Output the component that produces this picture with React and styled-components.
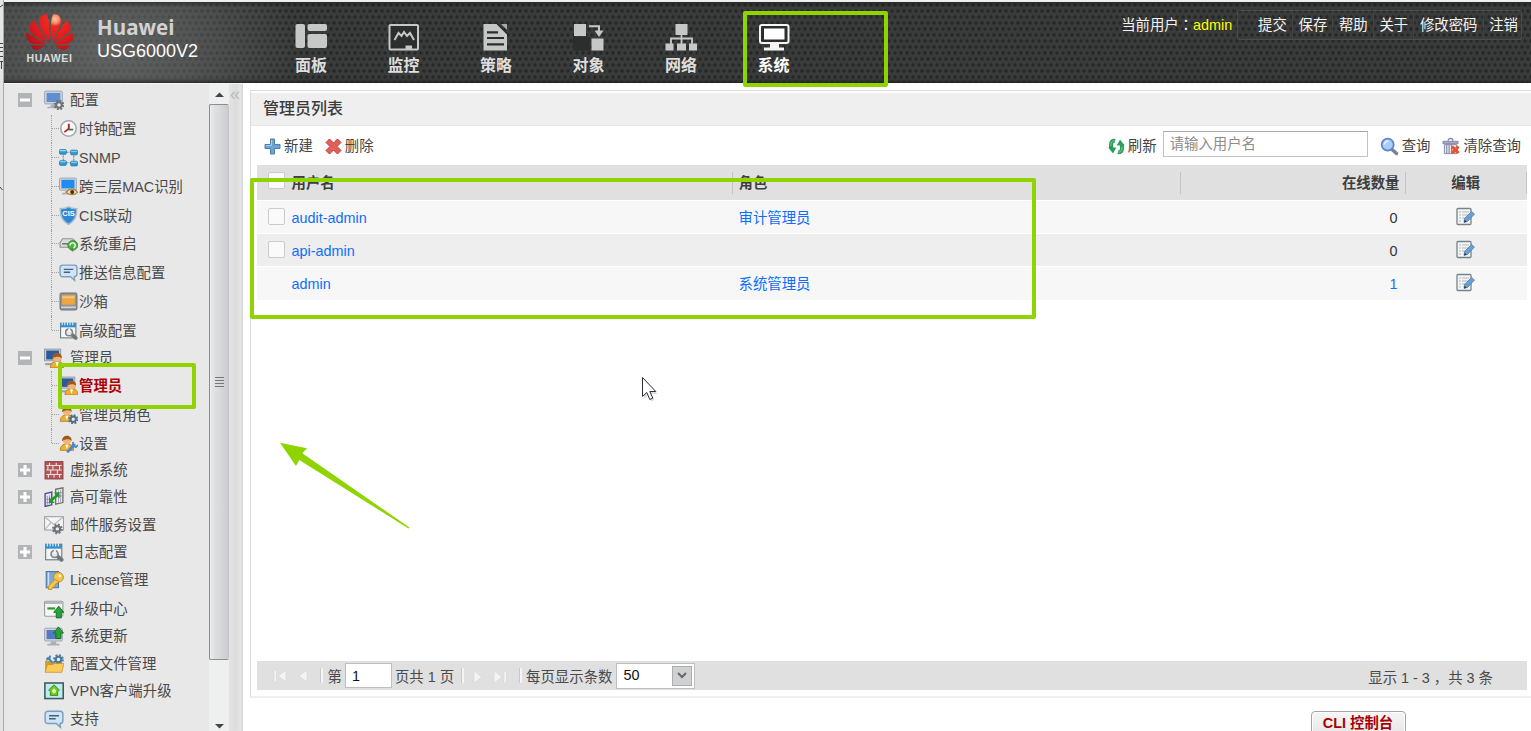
import React from 'react';
import { SiHuawei } from 'react-icons/si';
import styled, { createGlobalStyle } from 'styled-components';

const GlobalStyle = createGlobalStyle`
  * {
    box-sizing: border-box;
  }
  body {
    margin: 0;
    background: #fff;
    font-family: "Liberation Sans", "Noto Sans CJK SC", sans-serif;
    font-size: 14.4px;
    color: #444;
    overflow: hidden;
  }
`;

const Page = styled.div`
  position: relative;
  display: flex;
  width: 1531px;
  height: 731px;
  overflow: hidden;
`;

const EdgeStrip = styled.div`
  width: 4px;
  flex: none;
  background: #e4e4e4;
  border-right: 1px solid #a9a9a9;
  svg {
    display: block;
  }
`;

const Frame = styled.div`
  flex: 1;
  min-width: 0;
  display: flex;
  flex-direction: column;
  border-top: 2px solid #eef0f0;
`;

// colon sits in the middle of its cell
const Colon = styled.span`
  font-family: "Noto Sans CJK TC", sans-serif;
  line-height: 1;
`;

/* ---------- header ---------- */

const Header = styled.header`
  height: 81px;
  flex: none;
  display: flex;
  background-color: #3a3b3b;
  background-image: linear-gradient(180deg, rgba(30, 30, 30, 0.6), transparent 5px, transparent 76px, rgba(30, 30, 30, 0.7)),
    radial-gradient(ellipse 190px 140px at 105px 48px, rgba(122, 125, 125, 0.62) 0%, rgba(112, 115, 115, 0.46) 45%, rgba(100, 100, 100, 0) 100%),
    radial-gradient(circle at 3px 3px, #262727 1.2px, transparent 2.2px),
    radial-gradient(circle at 3px 3px, #262727 1.2px, transparent 2.2px);
  background-size: auto, auto, 6px 12px, 6px 12px;
  background-position: 0 0, 0 0, 0 0, 3px 6px;
  background-repeat: no-repeat, no-repeat, repeat, repeat;
`;

const Brand = styled.div`
  width: 291px;
  display: flex;
  padding: 6px 0 0 21px;
`;

const Logo = styled.div`
  width: 49px;
  height: 60px;
  overflow: hidden;
  display: flex;
  flex-direction: column;
  align-items: center;
  svg {
    flex: none;
    fill: url(#petal);
  }
  span {
    margin-top: -4px;
    font: bold 10.5px/12px "Liberation Sans", sans-serif;
    color: #dcdcdc;
    letter-spacing: 0.7px;
  }
`;

const Product = styled.div`
  padding: 6px 0 0 23px;
  h1 {
    margin: 0;
    font: 700 20.5px/26px "Open Sans", sans-serif;
    color: #d2d2d2;
  }
  p {
    margin: 0;
    font-size: 18px;
    line-height: 22px;
    color: #fff;
  }
`;

const Nav = styled.nav`
  display: flex;
  padding-top: 22px;
`;

const NavItem = styled.a`
  width: 92.5px;
  color: ${(p) => (p.$active ? '#fff' : '#dedede')};
  font: bold 16px/26px "Noto Sans CJK SC", sans-serif;
  svg {
    display: block;
    height: 28px;
    margin-bottom: -1px;
    color: ${(p) => (p.$active ? '#f4f4f4' : '#c6c7c7')};
  }
`;

const UserBar = styled.div`
  margin-left: auto;
  padding: 8px 9px 0 0;
  display: flex;
  height: 38px;
  color: #f2f2f2;
  line-height: 30px;
  b {
    font-weight: normal;
    color: #ff0;
  }
`;

const UserLinks = styled.div`
  display: flex;
  margin-left: 5px;
  padding-left: 14px;
  border: 1px solid #4b4c4c;
  border-radius: 2px;
  line-height: 28px;
  a {
    padding: 0 5px 0 5.7px;
  }
  a + a {
    border-left: 1px solid #414242;
  }
  a:last-child {
    padding-right: 3px;
  }
`;

/* ---------- sidebar ---------- */

const Body = styled.div`
  flex: 1;
  display: flex;
  min-height: 0;
`;

const Sidebar = styled.aside`
  width: 239px;
  flex: none;
  display: flex;
  background: #e8e8e8;
  border-top: 1px solid #f5f5f5;
`;

const Tree = styled.div`
  width: 205px;
  padding-top: 2px;
  overflow: hidden;
`;

const TreeRow = styled.div`
  display: flex;
  align-items: center;
  height: ${(p) => p.$h}px;
  padding-left: ${(p) => (p.$child ? 47 : 14)}px;
  white-space: nowrap;
  color: ${(p) => (p.$selected ? '#b00000' : '#4a4a4a')};
  font-weight: ${(p) => (p.$selected ? 'bold' : 'normal')};
  svg {
    flex: none;
  }
`;

const Expander = styled.span`
  width: 14px;
  height: 14px;
  margin-right: 12px;
  flex: none;
  display: flex;
  align-items: center;
  justify-content: center;
  background: ${(p) => (p.$none ? 'transparent' : '#b2b5b5')};
`;

const Branch = styled.span`
  align-self: flex-start;
  height: ${(p) => (p.$last ? '50%' : '100%')};
  border-left: 1px dotted #a0a0a0;
`;

const Elbow = styled.span`
  width: 7px;
  border-top: 1px dotted #a0a0a0;
`;

const TreeLabel = styled.span`
  margin-left: ${(p) => (p.$child ? 1 : 6)}px;
  padding-top: ${(p) => (p.$child ? 1 : 0)}px;
  line-height: 20px;
`;

const Scrollbar = styled.div`
  width: 20px;
  display: flex;
  flex-direction: column;
  background: #eeefef;
`;

const ScrollArrow = styled.div`
  height: 20px;
  display: flex;
  align-items: center;
  justify-content: center;
  margin-top: ${(p) => (p.$down ? 'auto' : 0)};
  padding-top: ${(p) => (p.$down ? 10 : 0)}px;
`;

const Thumb = styled.div`
  height: 556px;
  border: 1px solid #8e8e8e;
  border-right-color: #c4c4c8;
  border-radius: 2px;
  background: linear-gradient(90deg, #ecedee, #dfe0e2 25%, #d6d8da 60%, #cbccd0);
  display: flex;
  align-items: center;
  justify-content: center;
`;

const Splitter = styled.div`
  width: 14px;
  padding: 2px 0 0 1px;
  background: linear-gradient(90deg, #e3e3e3, #dcdcdc 50%, #e6e6e6 85%, #cfcfcf);
  color: #bcbcbc;
  font-size: 18px;
  line-height: 16px;
`;

/* ---------- main panel ---------- */

const Main = styled.main`
  flex: 1;
  min-width: 0;
  padding: 7px 0 0 7px;
  display: flex;
  flex-direction: column;
`;

const Panel = styled.section`
  height: 608px;
  flex: none;
  display: flex;
  flex-direction: column;
  border: 1px solid #dcdcdc;
  border-right: 0;
  border-bottom: 2px solid #efefef;
`;

const PanelTitle = styled.h2`
  margin: 2px 0 0;
  height: 33px;
  padding-left: 12px;
  background: #efefef;
  border-bottom: 1px solid #e4e4e4;
  font: 500 16px/28px "Noto Sans CJK SC", sans-serif;
  color: #3c3c3c;
`;

const Toolbar = styled.div`
  height: 39px;
  display: flex;
  align-items: center;
  padding: 1px 10px 0 13px;
`;

const ToolButton = styled.span`
  display: flex;
  align-items: center;
  gap: 3px;
  margin-right: 12px;
  line-height: 20px;
  &:last-child {
    margin-right: 0;
  }
`;

const Search = styled.input`
  width: 205px;
  height: 26px;
  margin: -4px 12px 0 -6px;
  padding: 0 0 1px 6px;
  border: 1px solid #c3c3c3;
  border-top-color: #a8a8a8;
  font: 14.4px "Liberation Sans", "Noto Sans CJK SC", sans-serif;
  outline: 0;
  &::placeholder {
    color: #8c8c8c;
    opacity: 1;
  }
`;

const Spacer = styled.span`
  flex: 1;
`;

const columns = `
  display: grid;
  grid-template-columns: 476px 448px 225px 1fr;
  align-items: center;
`;

const Table = styled.div`
  margin: 0 4px 0 5.5px;
  flex: 1;
`;

const HeadRow = styled.div`
  ${columns}
  height: 36px;
  background: #e0e0e0;
  border-bottom: 1px solid #fff;
  font-weight: bold;
  color: #3e3e3e;
`;

const DataRow = styled.div`
  ${columns}
  height: 33.2px;
  background: ${(p) => (p.$odd ? '#eeeeee' : '#f7f7f7')};
  border-bottom: 1px solid #fff;
  color: #0d6efd;
`;

const Cell = styled.div`
  display: flex;
  align-items: center;
  height: 22px;
  line-height: 20px;
  justify-content: ${(p) => p.$align || 'flex-start'};
  padding: ${(p) => p.$pad || '0'};
  color: ${(p) => p.$color || 'inherit'};
  border-right: 1px solid ${(p) => (p.$rule ? '#c4c4c4' : 'transparent')};
  svg {
    margin-top: -2px;
  }
`;

const Checkbox = styled.span`
  width: 17px;
  height: 17px;
  flex: none;
  margin: ${(p) => (p.$hidden ? 0 : '-4px')} 7px 0 0;
  border: 1px solid #c9cccc;
  border-radius: 2px;
  background: #fafafa;
  visibility: ${(p) => (p.$hidden ? 'hidden' : 'visible')};
`;

const Pager = styled.div`
  height: 29px;
  margin: 0 4px 6px 5.5px;
  display: flex;
  align-items: center;
  background: #e0e0e0;
  color: #4a4a4a;
  white-space: nowrap;
  svg {
    flex: none;
  }
`;

const Divider = styled.span`
  width: 3px;
  height: 15px;
  border-left: 1px solid #c9c9c9;
  border-right: 2px solid #f4f4f4;
  margin: ${(p) => p.$margin};
`;

const PageInput = styled.span`
  width: 47px;
  height: 25px;
  margin: 0 3px 0 3px;
  padding-left: 6px;
  border: 1px solid #bcbec0;
  background: #fff;
  color: #111;
  line-height: 24px;
`;

const PageSize = styled.span`
  display: flex;
  align-items: center;
  justify-content: space-between;
  width: 79px;
  height: 26px;
  margin-left: 4px;
  padding: 0 2px 1px 6px;
  border: 1px solid #bcbec0;
  background: #fff;
  color: #111;
  i {
    display: flex;
    align-items: center;
    justify-content: center;
    width: 20px;
    height: 20px;
    margin-top: 1px;
    border: 1px solid #adadb0;
    background: #d0d1d3;
  }
`;

const Summary = styled.span`
  margin-left: auto;
  padding: 2px 34px 0 0;
`;

const Footer = styled.footer`
  display: flex;
  justify-content: flex-end;
  padding: 13px 125px 0 0;
`;

const CliButton = styled.button`
  width: 95px;
  height: 26px;
  flex: none;
  padding: 0 1px 2px 0;
  border: 1px solid #a4a4a4;
  border-radius: 4px;
  background: linear-gradient(#f6f6f6, #e6e6e6);
  box-shadow: inset 0 0 0 1px #fff;
  color: #a80000;
  font: bold 14.4px/22px "Liberation Sans", "Noto Sans CJK SC", sans-serif;
  white-space: nowrap;
`;

/* ---------- marks over the page ---------- */

const Highlight = styled.div`
  position: absolute;
  left: ${(p) => p.$x}px;
  top: ${(p) => p.$y}px;
  width: ${(p) => p.$w}px;
  height: ${(p) => p.$h}px;
  border: 4px solid #8fd400;
  border-radius: 2px;
`;

const Pointer = styled.svg`
  position: absolute;
  left: ${(p) => p.$x}px;
  top: ${(p) => p.$y}px;
`;

/* ---------- icons ---------- */

const NavSvg = ({ children }) => (
  <svg width="32" height="28" viewBox="0 0 32 28" fill="currentColor">
    {children}
  </svg>
);

const navItems = [
  {
    label: '面板',
    icon: (
      <>
        <rect x="0.5" y="0" width="9.5" height="24" rx="2" />
        <rect x="12.5" y="0" width="19.5" height="7" rx="2" />
        <rect x="12.5" y="10" width="19.5" height="14" rx="2" />
      </>
    ),
  },
  {
    label: '监控',
    icon: (
      <>
        <rect x="1.5" y="1" width="28.5" height="24.5" rx="1" fill="#2c2d2d" stroke="currentColor" strokeWidth="2" />
        <path d="M6.500 16l4-7 3 3L16 8l3 4 3-3 4 7" fill="none" stroke="currentColor" strokeWidth="2" />
        <path d="M17.500 26v-4.500h6.500V26z" />
      </>
    ),
  },
  {
    label: '策略',
    icon: (
      <>
        <path d="M3.500 0h13.500l10 10v16.500H3.500z" />
        <path d="M21 0h6v6z" opacity=".8" />
        <path d="M16.500 -1l11 11" stroke="#2c2d2d" strokeWidth="1.500" />
        <path d="M7 8.300h11M7 14h17M7 20.300h17" stroke="#2c2d2d" strokeWidth="2.200" />
      </>
    ),
  },
  {
    label: '对象',
    icon: (
      <>
        <path d="M0 13h17v13.500H0z" fill="#2c2d2d" />
        <rect x="1" y="0" width="12" height="12" />
        <rect x="18.500" y="14.500" width="12" height="12" />
        <path d="M16 2.300h10V7" fill="none" stroke="currentColor" strokeWidth="2" />
        <path d="M21.500 6.500h9L26 13z" />
      </>
    ),
  },
  {
    label: '网络',
    icon: (
      <>
        <rect x="10.500" y="0" width="12" height="11" />
        <path d="M16.500 11v9M6 20v-5.500h21V20" fill="none" stroke="currentColor" strokeWidth="1.800" />
        <rect x="0.500" y="19.500" width="8" height="7" />
        <rect x="12" y="19.500" width="9" height="7" />
        <rect x="24" y="19.500" width="8" height="7" />
      </>
    ),
  },
  {
    label: '系统',
    active: true,
    icon: (
      <>
        <rect x="2" y="1" width="28.500" height="18" rx="2" fill="#2c2d2d" stroke="currentColor" strokeWidth="2" />
        <rect x="6" y="4.500" width="20.500" height="11" fill="#fff" />
        <path d="M12 20h9v3.500h5v3H6v-3h6z" />
      </>
    ),
  },
];

const Screen = ({ fill = '#4f7fc8' }) => (
  <>
    <rect x="0.5" y="1" width="16" height="11.500" rx="1" fill="#d2d6dc" stroke="#98a0a8" strokeWidth=".8" />
    <rect x="2.300" y="2.600" width="12.400" height="8.200" fill={fill} />
    <path d="M6 13h5v2h3v1.500H3V15h3z" fill="#a9aeb4" />
  </>
);

const Gear = ({ x = 13.5, y = 13.5, fill = '#6f7276' }) => (
  <g>
    <circle cx={x} cy={y} r="3.900" fill="none" stroke={fill} strokeWidth="1.800" strokeDasharray="1.700 1.360" />
    <circle cx={x} cy={y} r="2.500" fill="#e8ecef" stroke={fill} strokeWidth="1.900" />
  </g>
);

const Person = () => (
  <>
    <path d="M3.200 17.500c0-4 2-6 6.300-6s6.300 2 6.300 6z" fill="#efb02e" stroke="#a8701a" strokeWidth=".7" />
    <path d="M8 12l1.500 4.500L11 12z" fill="#fff" />
    <circle cx="9.500" cy="8" r="4" fill="#eeb478" />
    <path d="M5 8.800C4.300 1.800 14.700 1.800 14 8.800c-1-2.300-6-2.500-9 0z" fill="#9a5a1c" />
  </>
);

const Note = () => (
  <>
    <rect x="1.500" y="2" width="14.500" height="14" fill="#f3f5f6" stroke="#6d7a82" strokeWidth="1" />
    <path d="M1.500 2h14.500v4H1.500z" fill="#2f8fd0" />
    <path d="M3 1v3M5.500 1v3M8 1v3M10.500 1v3M13 1v3" stroke="#e8eef2" strokeWidth="1" />
    <path d="M15.800 16l-3.500-3" stroke="#70777c" strokeWidth="3.600" strokeLinecap="round" />
    <circle cx="9.500" cy="10.800" r="3.200" fill="#e4e7e9" stroke="#7b8287" strokeWidth="1.400" />
    <path d="M9.800 10.800V7" stroke="#f3f5f6" strokeWidth="1.800" />
  </>
);

const Chat = () => (
  <>
    <path d="M3.500 2h11c1.500 0 2.500 1 2.500 2.500v6c0 1.500-1 2.500-2.500 2.500l.3 3.500L11 13H3.500C2 13 1 12 1 10.500v-6C1 3 2 2 3.500 2z" fill="#cfe4f7" stroke="#7d9dbd" strokeWidth="1.300" />
    <path d="M4.500 6h9M4.500 8.800h6" stroke="#44617f" strokeWidth="1.300" />
  </>
);

const UpArrow = ({ x = 9, y = 5 }) => (
  <path d={`M${x} ${y + 5.5}l4.500-5.500 4.500 5.500h-2.200v5h-4.600v-5z`} fill="#27a33a" stroke="#0e6a20" strokeWidth=".8" />
);

const icons = {
  config: (
    <>
      <Screen fill="#5f8fd0" />
      <Gear />
    </>
  ),
  clock: (
    <>
      <circle cx="9" cy="9" r="7.300" fill="#fbfbfb" stroke="#a3a8b0" strokeWidth="1.500" />
      <path d="M9.300 4.500V10" stroke="#c21f1f" strokeWidth="1.800" />
      <path d="M5 12.500l4-3" stroke="#c21f1f" strokeWidth="1.600" />
      <path d="M9 10h4.500" stroke="#2f7a3c" strokeWidth="1.600" />
    </>
  ),
  snmp: (
    <>
      <path d="M4 4h10M4 14h10M4 4v10M14 4v10" stroke="#7a8288" strokeWidth="1" strokeDasharray="2 1" />
      <g fill="#2f9ad0" stroke="#1b6f9e" strokeWidth=".6">
        <rect x="0.500" y="1.500" width="6.500" height="4.500" rx="1" />
        <rect x="11" y="2" width="6.500" height="4.500" rx="1" />
        <rect x="0.500" y="12" width="6.500" height="4.500" rx="1" />
        <rect x="11" y="12.500" width="6.500" height="4.500" rx="1" />
      </g>
      <path d="M1 2.500h5.500M11.500 3H17M1 13h5.500M11.500 13.500H17" stroke="#9bdcf5" strokeWidth="1" />
    </>
  ),
  mac: (
    <>
      <Screen fill="#1e8cf0" />
      <path d="M7 14.500c2.500-4 8-4 10.500 0-2.500 3-8 3-10.500 0z" fill="#f8e6c0" stroke="#b8862c" strokeWidth="1.200" />
      <circle cx="12.500" cy="14.300" r="2" fill="#40382c" />
    </>
  ),
  cis: (
    <>
      <path d="M9 .8c2.500 1.500 5 1.800 7.800 1.700.3 7-2 12-7.800 15C3.200 14.500.9 9.500 1.200 2.500 4 2.600 6.500 2.300 9 .8z" fill="#2f86d6" stroke="#a9bccb" strokeWidth="1.400" />
      <text x="9" y="9.800" textAnchor="middle" fontSize="7" fontWeight="bold" fontFamily="Liberation Sans" fill="#fff">CIS</text>
    </>
  ),
  restart: (
    <>
      <path d="M3.500 4.500h9.500l4 4v4H1V8z" fill="#d9dcdc" stroke="#8b9090" strokeWidth="1" />
      <path d="M3 9.300h6" stroke="#777" strokeWidth="1.500" />
      <circle cx="13" cy="10.800" r="4.600" fill="#52b04a" stroke="#358030" strokeWidth=".8" />
      <path d="M10.500 10.800a2.400 2.400 0 1 1 2.500 2.400" fill="none" stroke="#e8ffe0" strokeWidth="1.300" />
      <path d="M13.500 12v5l-3-2.500z" fill="#3c9436" />
    </>
  ),
  push: <Chat />,
  sandbox: (
    <>
      <rect x="1" y="1" width="16" height="16" rx="1.500" fill="#8f959b" stroke="#6d7379" strokeWidth="1" />
      <rect x="3" y="3" width="12" height="9" fill="#f0a640" />
      <path d="M3 5h12" stroke="#f7c67c" strokeWidth="2" />
      <path d="M2 14.500h14" stroke="#d0d4d8" strokeWidth="1.500" />
    </>
  ),
  advanced: <Note />,
  admin: (
    <>
      <rect x="0.500" y="1" width="14.500" height="10.500" fill="#c8ccd0" stroke="#8f959b" strokeWidth=".8" />
      <rect x="2" y="2.300" width="11.500" height="8" fill="#2b5a9c" />
      <path d="M1 13.500h7v2H1z" fill="#9da3a8" />
      <g transform="translate(2.600 1) scale(.97)">
        <Person />
      </g>
    </>
  ),
  role: (
    <>
      <g transform="translate(-2 -2)">
        <Person />
      </g>
      <Gear fill="#4f7088" />
    </>
  ),
  settings: (
    <>
      <g transform="translate(-2 -2)">
        <Person />
      </g>
      <path d="M8.500 16.500l6-6" stroke="#4b86cc" strokeWidth="2.600" strokeLinecap="round" />
      <path d="M13.500 7.500l-.5 3.500 3 1.500 2-2" fill="none" stroke="#4b86cc" strokeWidth="1.700" />
    </>
  ),
  firewall: (
    <>
      <rect x="1" y="1.500" width="16" height="15.500" fill="#b0575a" stroke="#8d3f43" strokeWidth="1" />
      <path d="M2 5h14M2 9h14M2 13h14M5 2.500V5M11 2.500V5M3.500 5v4M8 5v4M14 5v4M6 9v4M12 9v4M4 13v3M9 13v3M14 13v3" stroke="#f0dcdc" strokeWidth="1" />
    </>
  ),
  ha: (
    <>
      <path d="M1 6l6-1.500V16L1 17.500z" fill="#e6e4f6" stroke="#4d4590" strokeWidth="1.200" />
      <path d="M10.500 2L17 .8V14l-6.500 1.500z" fill="#f2f4f2" stroke="#6c736c" strokeWidth="1.200" />
      <path d="M3 8v8M5 7.500v8M1 11h6M1 14h6M13 3v11M15 2.500v11M11 8h6M11 5h6" stroke="#8a87a8" strokeWidth=".7" />
      <path d="M6 12.500l6-5" stroke="#249a28" strokeWidth="2.400" />
      <path d="M4.500 9v5.500h5.300zM14 10.300V5H8.800z" fill="#249a28" />
    </>
  ),
  mail: (
    <>
      <rect x="0.500" y="1.500" width="17" height="12" fill="#f6f6f6" stroke="#9fa4a8" strokeWidth="1" />
      <path d="M1 2l8 6.500L17 2M1 13l5.500-6.500" fill="none" stroke="#b4b8bc" strokeWidth="1" />
      <Gear x={12} y={12.5} />
    </>
  ),
  log: <Note />,
  license: (
    <>
      <path d="M2 1.500h11v14.500H2z" fill="#7ea8da" stroke="#4d78ab" strokeWidth="1" />
      <path d="M4 2v13.500" stroke="#cfe0f3" strokeWidth="1.300" />
      <circle cx="13" cy="6.500" r="4.400" fill="#f5c84a" stroke="#c08a1c" strokeWidth=".9" />
      <path d="M10 8.500L4 14.500v3h3l1-2 1.500-.5.500-2 3.500-2.500z" fill="#f5c84a" stroke="#c08a1c" strokeWidth=".8" />
      <circle cx="14.300" cy="5.300" r="1.200" fill="#fff" />
    </>
  ),
  upgrade: (
    <>
      <rect x="0.500" y="2" width="16.500" height="13.500" rx="1" fill="#f5f6f6" stroke="#979ca0" strokeWidth="1" />
      <path d="M1 3.500h16" stroke="#b4b8bb" strokeWidth="2" />
      <path d="M3 8.500h7" stroke="#2c9a30" strokeWidth="2" />
      <UpArrow x={8.8} y={6.5} />
    </>
  ),
  update: (
    <>
      <g transform="translate(0 1)">
        <Screen fill="#5679c4" />
      </g>
      <UpArrow x={8.5} y={0.8} />
    </>
  ),
  files: (
    <>
      <path d="M1 6h5l1.500 1.500H16V16H1z" fill="#d89a28" />
      <path d="M3 3l5 5M5.500 1.500L5 4 2 5" stroke="#4286bd" strokeWidth="1.800" fill="none" />
      <Gear x={13} y={5} fill="#4b7798" />
      <path d="M1 16.500L3 9.500h5l1.500-1H18l-2 8z" fill="#f9cb58" stroke="#cc9023" strokeWidth=".7" />
    </>
  ),
  vpn: (
    <>
      <rect x="0.800" y="1.800" width="16.500" height="14" fill="#bcebf0" stroke="#3d5a5c" strokeWidth="1.400" />
      <path d="M9 3.500l4.800 4.500-1.500 1.500V13H5.700V9.500L4.200 8z" fill="#6cc820" stroke="#3d8512" strokeWidth=".8" />
      <path d="M9 6.500l2 2.300L10 11H8L7 8.800z" fill="#e4ff9c" />
    </>
  ),
  support: <Chat />,
};

const Icon = ({ name, size = 19 }) => (
  <svg width={size} height={size} viewBox="0 0 18 18" fill="none">
    {icons[name]}
  </svg>
);

const AddIcon = () => (
  <svg width="17" height="17" viewBox="0 0 17 17">
    <path d="M6.500 1h4v5.500H16v4h-5.500V16h-4v-5.500H1v-4h5.500z" fill="#6fa3d2" stroke="#4a7fae" strokeWidth="1" strokeLinejoin="round" />
    <path d="M7.500 2v5.500H2" fill="none" stroke="#a5cdec" strokeWidth="1" />
  </svg>
);

const DeleteIcon = () => (
  <svg width="17" height="17" viewBox="0 0 17 17">
    <path d="M4.500 1L8.500 5l4-4L16 4.500l-4 4 4 4-3.500 3.500-4-4-4 4L1 12.500l4-4-4-4z" fill="#e2605c" stroke="#b83a3a" strokeWidth="1" strokeLinejoin="round" />
  </svg>
);

const RefreshIcon = () => (
  <svg width="17" height="17" viewBox="0 0 17 17">
    <path d="M7 3C4 2 3 4.500 3 7v4" fill="none" stroke="#2b9a58" strokeWidth="4" />
    <path d="M.3 9.500h8L5 15.500z" fill="#2b9a58" />
    <path d="M10 14c3 .8 4-1.500 4-4V6" fill="none" stroke="#2f9f5c" strokeWidth="4" />
    <path d="M16.700 7.500h-8L12 1.500z" fill="#2f9f5c" />
    <path d="M6.500 2.700C4 2.300 2.800 5 2.800 8M10.500 14.300c2.500 0 3.600-2.300 3.600-5.600" fill="none" stroke="#7ed09b" strokeWidth="1" />
  </svg>
);

const SearchIcon = () => (
  <svg width="19" height="19" viewBox="0 0 19 19">
    <path d="M12 12.500l4.500 4" stroke="#7c828c" strokeWidth="3.400" strokeLinecap="round" />
    <circle cx="7.700" cy="7.700" r="6" fill="#a9cdf8" stroke="#5b86d0" strokeWidth="1.800" />
    <path d="M4.500 7.500a3.500 3.500 0 0 1 4-3.500" stroke="#e8f4ff" strokeWidth="1.600" fill="none" />
  </svg>
);

const ClearIcon = () => (
  <svg width="18" height="19" viewBox="0 0 19 19">
    <path d="M6.500 3.500C6.500 0 11.500 0 11.500 3.500" fill="none" stroke="#7c7fa0" strokeWidth="1.400" />
    <path d="M1 4h16v2.500H1z" fill="#a6a8c4" stroke="#73769a" strokeWidth=".8" />
    <path d="M2.500 7.500h13V17h-13z" fill="#e8e9f4" stroke="#8184a6" strokeWidth="1" />
    <path d="M5 8v8.500M7.500 8v8.500M10 8v8.500" stroke="#8184a6" strokeWidth="1.100" />
    <path d="M11.500 8.500l2.500 2 2.500-2 2 2-2 2.500 2 2.500-2 2-2.500-2-2.500 2-2-2 2-2.500-2-2.500z" fill="#e9532e" />
  </svg>
);

const EditIcon = () => (
  <svg width="19" height="19" viewBox="0 0 19 19">
    <rect x="1" y="1.500" width="14" height="16" rx="1" fill="#f4f6f6" stroke="#76838a" strokeWidth="1.300" />
    <path d="M3 5h2M3 8h2M3 11h2M3 14h2M6 5h7M6 8h6M6 11h3" stroke="#b0b7bb" strokeWidth="1" />
    <path d="M8.500 11.500L15.500 4.500 18.500 7l-7 7.500-3.500.8z" fill="#6a9fd2" stroke="#4f7fae" strokeWidth=".8" />
    <path d="M8 15.500l.7-2.800 2 2z" fill="#333" />
  </svg>
);

/* ---------- data ---------- */

const tree = [
  {
    label: '配置', icon: 'config', h: 28.5, sign: '-',
    children: [
      { label: '时钟配置', icon: 'clock' },
      { label: 'SNMP', icon: 'snmp' },
      { label: '跨三层MAC识别', icon: 'mac' },
      { label: 'CIS联动', icon: 'cis' },
      { label: '系统重启', icon: 'restart' },
      { label: '推送信息配置', icon: 'push' },
      { label: '沙箱', icon: 'sandbox' },
      { label: '高级配置', icon: 'advanced' },
    ],
  },
  {
    label: '管理员', icon: 'admin', h: 26.5, sign: '-',
    children: [
      { label: '管理员', icon: 'admin', selected: true, h: 29.5 },
      { label: '管理员角色', icon: 'role' },
      { label: '设置', icon: 'settings', h: 28 },
    ],
  },
  { label: '虚拟系统', icon: 'firewall', h: 25.5, sign: '+' },
  { label: '高可靠性', icon: 'ha', h: 28, sign: '+' },
  { label: '邮件服务设置', icon: 'mail', h: 29 },
  { label: '日志配置', icon: 'log', h: 25, sign: '+' },
  { label: 'License管理', icon: 'license', h: 31 },
  { label: '升级中心', icon: 'upgrade', h: 26 },
  { label: '系统更新', icon: 'update', h: 28 },
  { label: '配置文件管理', icon: 'files', h: 28 },
  { label: 'VPN客户端升级', icon: 'vpn', h: 27 },
  { label: '支持', icon: 'support', h: 28 },
];

const admins = [
  { name: 'audit-admin', role: '审计管理员', online: 0 },
  { name: 'api-admin', role: '', online: 0 },
  { name: 'admin', role: '系统管理员', online: 1, builtin: true },
];

const links = ['提交', '保存', '帮助', '关于', '修改密码', '注销'];

function TreeNode({ node }) {
  return (
    <>
      <TreeRow $h={node.h}>
        <Expander $none={!node.sign}>
          {node.sign && (
            <svg width="10" height="10" viewBox="0 0 10 10">
              <path d={node.sign === '+' ? 'M0 5h10M5 0v10' : 'M0 5h10'} stroke="#fff" strokeWidth="3" />
            </svg>
          )}
        </Expander>
        <Icon name={node.icon} size={20} />
        <TreeLabel>{node.label}</TreeLabel>
      </TreeRow>
      {(node.children ?? []).map((child, i) => (
        <TreeRow key={child.label} $child $h={child.h ?? 28.75} $selected={child.selected}>
          <Branch $last={i === node.children.length - 1} />
          <Elbow />
          <Icon name={child.icon} />
          <TreeLabel $child>{child.label}</TreeLabel>
        </TreeRow>
      ))}
    </>
  );
}

const ArrowSvg = styled.svg`
  margin: ${(p) => p.$margin};
`;

const PagerArrow = ({ d, margin }) => (
  <ArrowSvg width="15" height="14" viewBox="0 0 15 14" $margin={margin}>
    <path d={d} fill="#f4f4f4" stroke="#d0d0d0" strokeWidth=".5" />
  </ArrowSvg>
);

export default function App() {
  return (
    <Page>
      <GlobalStyle />
      <EdgeStrip>
        <svg width="3" height="200" viewBox="0 0 3 200">
          <path d="M0 7l3-2M0 43.500h3M0 47.500h3M0 51.500h3M0 56.500h3M0 61.500h3M1.500 62v7M0 187l2.500 3" stroke="#444" strokeWidth="1" />
        </svg>
      </EdgeStrip>
      <Frame>
        <Header>
          <Brand>
            <Logo>
              <svg width="0" height="0">
                <defs>
                  <radialGradient id="petal" gradientUnits="userSpaceOnUse" cx="14.500" cy="5.500" r="18">
                    <stop offset="0" stopColor="#ffc39c" />
                    <stop offset=".12" stopColor="#f58a68" />
                    <stop offset=".2" stopColor="#ee2a20" />
                    <stop offset=".6" stopColor="#e01a1c" />
                    <stop offset="1" stopColor="#a81418" />
                  </radialGradient>
                </defs>
              </svg>
              <SiHuawei size={48} />
              <span>HUAWEI</span>
            </Logo>
            <Product>
              <h1>Huawei</h1>
              <p>USG6000V2</p>
            </Product>
          </Brand>
          <Nav>
            {navItems.map((item) => (
              <NavItem key={item.label} $active={item.active}>
                <NavSvg>{item.icon}</NavSvg>
                {item.label}
              </NavItem>
            ))}
          </Nav>
          <UserBar>
            <span>当前用户<Colon>：</Colon></span>
            <b>admin</b>
            <UserLinks>
              {links.map((l) => (
                <a key={l}>{l}</a>
              ))}
            </UserLinks>
          </UserBar>
        </Header>

        <Body>
          <Sidebar>
            <Tree>
              {tree.map((node) => (
                <TreeNode key={node.label} node={node} />
              ))}
            </Tree>
            <Scrollbar>
              <ScrollArrow>
                <svg width="9" height="5"><path d="M0 5l4.500-4.500L9 5z" fill="#444" /></svg>
              </ScrollArrow>
              <Thumb>
                <svg width="9" height="12">
                  <path d="M0 1.500h9M0 4.500h9M0 7.500h9M0 10.500h9" stroke="#77797c" strokeWidth="1" />
                </svg>
              </Thumb>
              <ScrollArrow $down>
                <svg width="9" height="5"><path d="M0 0l4.500 4.500L9 0z" fill="#444" /></svg>
              </ScrollArrow>
            </Scrollbar>
            <Splitter>«</Splitter>
          </Sidebar>

          <Main>
            <Panel>
              <PanelTitle>管理员列表</PanelTitle>
              <Toolbar>
                <ToolButton><AddIcon />新建</ToolButton>
                <ToolButton><DeleteIcon />删除</ToolButton>
                <Spacer />
                <ToolButton><RefreshIcon />刷新</ToolButton>
                <Search placeholder="请输入用户名" />
                <ToolButton><SearchIcon />查询</ToolButton>
                <ToolButton><ClearIcon />清除查询</ToolButton>
              </Toolbar>
              <Table>
                <HeadRow>
                  <Cell $pad="0 0 0 11px" $rule><Checkbox />用户名</Cell>
                  <Cell $pad="0 0 0 6px" $rule>角色</Cell>
                  <Cell $align="flex-end" $pad="0 5px 0 0" $rule>在线数量</Cell>
                  <Cell $align="center" $rule>编辑</Cell>
                </HeadRow>
                {admins.map((row, i) => (
                  <DataRow key={row.name} $odd={i % 2}>
                    <Cell $pad="2px 0 0 11px"><Checkbox $hidden={row.builtin} />{row.name}</Cell>
                    <Cell $pad="2px 0 0 6px">{row.role}</Cell>
                    <Cell $align="flex-end" $pad="2px 7px 0 0" $color={row.online ? '#0d6efd' : '#333'}>{row.online}</Cell>
                    <Cell $align="center"><EditIcon /></Cell>
                  </DataRow>
                ))}
              </Table>
              <Pager>
                <PagerArrow margin="0 0 0 16px" d="M1 1h2.500v12H1zM13 1v12L5 7z" />
                <PagerArrow margin="0 0 0 8px" d="M11 1v12L3 7z" />
                <Divider $margin="0 5px 0 9px" />
                第
                <PageInput>1</PageInput>
                页共 1 页
                <Divider $margin="0 7px" />
                <PagerArrow margin="2px 0 0 0" d="M3 1v12l8-6z" />
                <PagerArrow margin="2px 0 0 7px" d="M1 1v12l8-6zM11 1h2.500v12H11z" />
                <Divider $margin="0 4px 0 11px" />
                每页显示条数
                <PageSize>
                  50
                  <i>
                    <svg width="10" height="7"><path d="M1 1l4 4 4-4" fill="none" stroke="#66686c" strokeWidth="2" /></svg>
                  </i>
                </PageSize>
                <Summary>显示 1 - 3&nbsp;，共 3 条</Summary>
              </Pager>
            </Panel>
            <Footer>
              <CliButton>CLI 控制台</CliButton>
            </Footer>
          </Main>
        </Body>
      </Frame>

      <Highlight $x={743} $y={11} $w={145} $h={76} />
      <Highlight $x={250} $y={178} $w={786} $h={141} />
      <Highlight $x={58} $y={363} $w={138} $h={46} />
      <Pointer $x={280} $y={442} width="130" height="88">
        <path d="M0 .7L27 6.300 22.300 11.300 129.500 85.500 128.500 86.500 19.300 18 16 24z" fill="#8fd400" />
      </Pointer>
      <Pointer $x={641} $y={376} width="20" height="28">
        <path d="M3 4v19l4-4 3.500 6.500 3-1.500-3-6h6z" fill="#bbb" opacity=".5" />
        <path d="M1.500 1.500v19l4.300-4 3 7 3-1.400-3-6.600h6z" fill="#fff" stroke="#2c2c3c" strokeWidth="1" />
      </Pointer>
    </Page>
  );
}
